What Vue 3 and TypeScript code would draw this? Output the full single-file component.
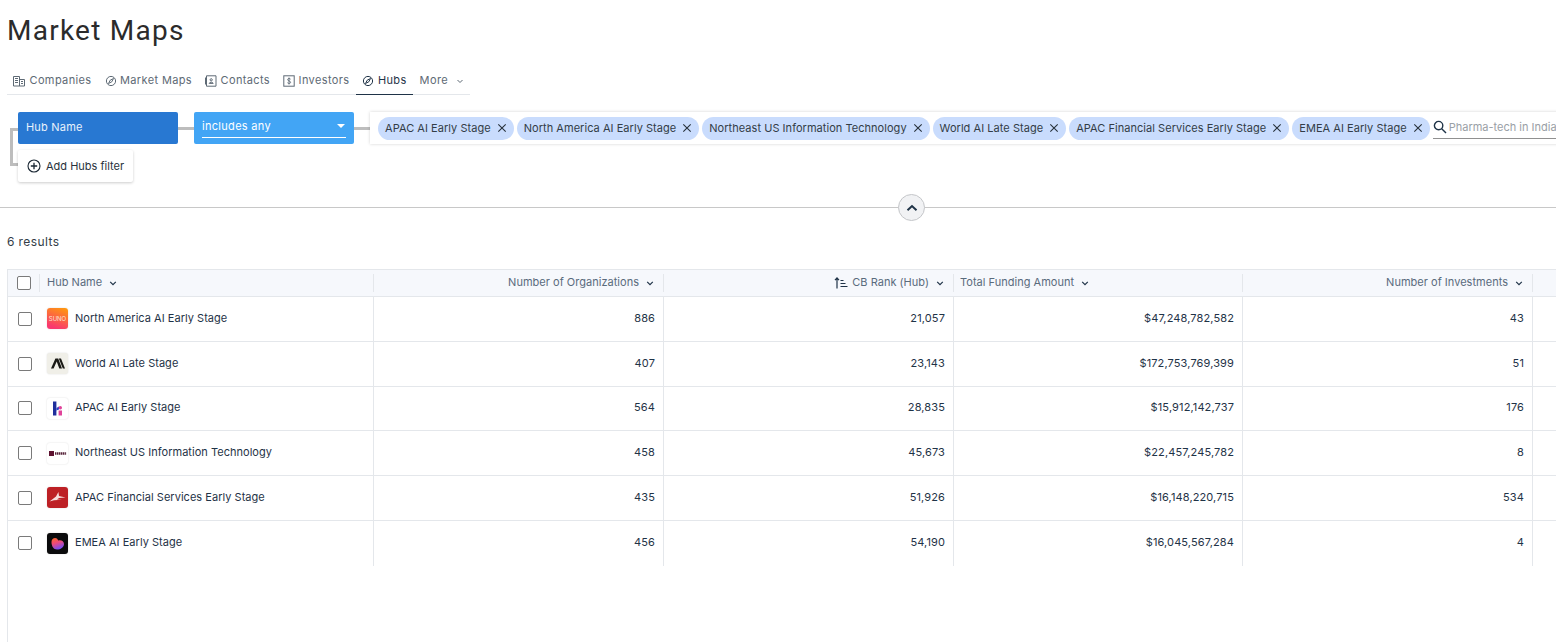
<script setup lang="ts">
interface Tab { label: string; icon: string; active?: boolean }
const tabs: Tab[] = [
  { label: 'Companies', icon: 'building' },
  { label: 'Market Maps', icon: 'compass' },
  { label: 'Contacts', icon: 'contact' },
  { label: 'Investors', icon: 'dollar' },
  { label: 'Hubs', icon: 'compass', active: true },
]
const chips: string[] = [
  'APAC AI Early Stage',
  'North America AI Early Stage',
  'Northeast US Information Technology',
  'World AI Late Stage',
  'APAC Financial Services Early Stage',
  'EMEA AI Early Stage',
]
interface Row { name: string; logo: string; orgs: string; rank: string; funding: string; inv: string }
const rows: Row[] = [
  { name: 'North America AI Early Stage', logo: 'suno', orgs: '886', rank: '21,057', funding: '$47,248,782,582', inv: '43' },
  { name: 'World AI Late Stage', logo: 'anth', orgs: '407', rank: '23,143', funding: '$172,753,769,399', inv: '51' },
  { name: 'APAC AI Early Stage', logo: 'k', orgs: '564', rank: '28,835', funding: '$15,912,142,737', inv: '176' },
  { name: 'Northeast US Information Technology', logo: 'dark', orgs: '458', rank: '45,673', funding: '$22,457,245,782', inv: '8' },
  { name: 'APAC Financial Services Early Stage', logo: 'red', orgs: '435', rank: '51,926', funding: '$16,148,220,715', inv: '534' },
  { name: 'EMEA AI Early Stage', logo: 'heart', orgs: '456', rank: '54,190', funding: '$16,045,567,284', inv: '4' },
]
</script>

<template>
  <div class="page">
    <h1 class="title">Market Maps</h1>

    <nav class="tabs">
      <a v-for="t in tabs" :key="t.label" class="tab" :class="{ active: t.active }">
        <svg class="tab-icon" viewBox="0 0 12 12" width="12" height="12" fill="none" stroke="currentColor" stroke-width="1">
          <template v-if="t.icon === 'building'">
            <path d="M0.5 11V1.5H6.5V11M6.5 4.5H11.5V11H0.5" />
            <path d="M2 3.5h3M2 5.5h3M2 7.5h3M8 6.5h2M8 8.5h2" />
          </template>
          <template v-else-if="t.icon === 'compass'">
            <circle cx="6" cy="6" r="4.6" />
            <path d="M8.5 3.5L6.8 6.8L3.5 8.5L5.2 5.2Z" />
          </template>
          <template v-else-if="t.icon === 'contact'">
            <path d="M1.5 0.8H11V11.2H1.5ZM0.5 2.5V9.5" />
            <circle cx="6.2" cy="4.8" r="1.1" />
            <path d="M4.2 8.4C4.4 6.8 8 6.8 8.2 8.4Z" />
          </template>
          <template v-else>
            <rect x="0.8" y="0.8" width="10.4" height="10.4" />
            <path d="M7.6 4.2C7.2 3.4 4.6 3.2 4.6 4.6C4.6 6.2 7.6 5.6 7.6 7.4C7.6 8.8 5 8.6 4.4 7.7M6 2.5V9.5" stroke-width="0.9" />
          </template>
        </svg>
        <span class="tab-label">{{ t.label }}</span>
      </a>
      <a class="tab more">
        <span class="tab-label">More</span>
        <svg viewBox="0 0 8 8" width="8" height="8" fill="none" stroke="currentColor" stroke-width="1"><path d="M1.5 3L4 5.5L6.5 3" /></svg>
      </a>
    </nav>

    <section class="filters">
      <div class="bracket"></div>
      <div class="filter-row">
        <div class="field">Hub Name</div>
        <div class="link"></div>
        <div class="operator">
          <div class="operator-inner">
            <span>includes any</span>
            <i class="caret"></i>
          </div>
        </div>
        <div class="link"></div>
        <div class="values">
          <span v-for="c in chips" :key="c" class="chip">
            {{ c }}
            <svg viewBox="0 0 10 10" width="10" height="10" fill="none" stroke="#28323c" stroke-width="1.1"><path d="M1.3 1.3L8.7 8.7M8.7 1.3L1.3 8.7" /></svg>
          </span>
          <div class="search">
            <svg viewBox="0 0 14 14" width="14" height="14" fill="none" stroke="#1f3347" stroke-width="1.4"><circle cx="5.6" cy="5.6" r="4.2" /><path d="M8.7 8.7L13 13" /></svg>
            <span class="placeholder">Pharma-tech in India</span>
          </div>
        </div>
      </div>
      <button class="add">
        <svg viewBox="0 0 14 14" width="14" height="14" fill="none" stroke="#1a2733" stroke-width="1.1"><circle cx="7" cy="7" r="6" /><path d="M7 3.8V10.2M3.8 7H10.2" stroke-width="1.3" /></svg>
        Add Hubs filter
      </button>
    </section>

    <div class="divider">
      <button class="collapse">
        <svg viewBox="0 0 12 8" width="12" height="8" fill="none" stroke="#1f3347" stroke-width="2"><path d="M1.5 6.2L6 2L10.5 6.2" /></svg>
      </button>
    </div>

    <div class="count">6 results</div>

    <div class="table">
      <div class="row head">
        <div class="cell first">
          <span class="box head-box"></span>
          <span class="head-sep"></span>
          <span class="head-label">Hub Name</span>
          <svg class="chev" viewBox="0 0 8 8" width="8" height="8" fill="none" stroke="currentColor" stroke-width="1.2"><path d="M1.2 2.8L4 5.6L6.8 2.8" /></svg>
        </div>
        <div class="cell num">
          <span class="head-label">Number of Organizations</span>
          <svg class="chev" viewBox="0 0 8 8" width="8" height="8" fill="none" stroke="currentColor" stroke-width="1.2"><path d="M1.2 2.8L4 5.6L6.8 2.8" /></svg>
        </div>
        <div class="cell num">
          <svg class="sort" viewBox="0 0 14 12" width="14" height="12" fill="none" stroke="#1f3347" stroke-width="1.2"><path d="M3 11.5V1M1 3.2L3 1L5 3.2M6.5 3.5H9.5M6.5 6.5H11.5M6.5 9.5H13.5" /></svg>
          <span class="head-label">CB Rank (Hub)</span>
          <svg class="chev" viewBox="0 0 8 8" width="8" height="8" fill="none" stroke="currentColor" stroke-width="1.2"><path d="M1.2 2.8L4 5.6L6.8 2.8" /></svg>
        </div>
        <div class="cell left">
          <span class="head-label">Total Funding Amount</span>
          <svg class="chev" viewBox="0 0 8 8" width="8" height="8" fill="none" stroke="currentColor" stroke-width="1.2"><path d="M1.2 2.8L4 5.6L6.8 2.8" /></svg>
        </div>
        <div class="cell num">
          <span class="head-label">Number of Investments</span>
          <svg class="chev" viewBox="0 0 8 8" width="8" height="8" fill="none" stroke="currentColor" stroke-width="1.2"><path d="M1.2 2.8L4 5.6L6.8 2.8" /></svg>
        </div>
        <div class="cell rest"></div>
      </div>

      <div v-for="r in rows" :key="r.name" class="row body">
        <div class="cell first">
          <span class="box"></span>
          <span class="logo" :class="'logo-' + r.logo">
            <span v-if="r.logo === 'suno'" class="suno">SUNO</span>
            <svg v-else-if="r.logo === 'anth'" viewBox="0 0 21 21" width="21" height="21" fill="#1a1a16"><path d="M4 15.5L8.4 5.5H11.2L15 15.5H12.3L9.7 8.6L6.6 15.5Z" /><path d="M11.8 5.5H14L18 15.5H15.8Z" /></svg>
            <svg v-else-if="r.logo === 'k'" viewBox="0 0 21 21" width="21" height="21"><path d="M6 3.5H9.4V17.5H6Z" fill="#1f2f9c" /><path d="M9.4 10L12 8.6V11.6L9.4 12.6Z" fill="#2c46c8" /><path d="M11.6 12.6H15V17.5H11.6Z" fill="#e0439a" /><circle cx="13.3" cy="9.8" r="1.7" fill="#e0439a" /></svg>
            <svg v-else-if="r.logo === 'dark'" viewBox="0 0 21 21" width="21" height="21"><path d="M2 8H7V13H2Z" fill="#5e1230" /><path d="M8 10.5H19.5" fill="none" stroke="#57243a" stroke-width="2.6" stroke-dasharray="1.4 0.5" /></svg>
            <svg v-else-if="r.logo === 'red'" viewBox="0 0 21 21" width="21" height="21" fill="#f6dcdc"><path d="M2.5 14.5L9 9.5L11.4 5L12 9L18.5 10.6L12 11L10 12.5L15 12.7L7 13.3Z" /></svg>
            <svg v-else viewBox="0 0 21 21" width="21" height="21"><defs><linearGradient id="heart" x1="0" y1="0" x2="0.4" y2="1"><stop offset="0" stop-color="#ff6a20" /><stop offset="0.5" stop-color="#ee4a7b" /><stop offset="1" stop-color="#7a4df0" /></linearGradient></defs><path d="M4.5 9C4.5 4.5 10 3.5 11.2 7.5C14 6.5 17 8 17 11C17 14.5 13.5 16.5 10 16.5C6.5 16.5 4.5 13 4.5 9Z" fill="url(#heart)" /></svg>
          </span>
          <span class="name">{{ r.name }}</span>
        </div>
        <div class="cell num value">{{ r.orgs }}</div>
        <div class="cell num value">{{ r.rank }}</div>
        <div class="cell num value">{{ r.funding }}</div>
        <div class="cell num value">{{ r.inv }}</div>
        <div class="cell rest"></div>
      </div>
    </div>
  </div>
</template>

<style>
html, body { margin: 0; background: #fff; overflow: hidden; }
</style>

<style scoped>
.page {
  width: 1556px;
  height: 642px;
  overflow: hidden;
  font-family: "Inter", "Liberation Sans", sans-serif;
  color: #1f3347;
  background: #fff;
}
.title {
  margin: 0;
  padding: 12px 0 0 7px;
  height: 56px;
  box-sizing: border-box;
  font-size: 28px;
  line-height: 37px;
  font-weight: 400;
  font-family: "Roboto", sans-serif;
  letter-spacing: 1.25px;
  color: #2b2b2b;
}
.tabs {
  display: flex;
  width: 463px;
  height: 39px;
  margin: 0 0 0 7px;
  box-sizing: border-box;
  border-bottom: 1px solid #e4e7eb;
  padding-top: 16px;
}
.tab {
  display: flex;
  align-items: flex-start;
  gap: 3.5px;
  padding: 0 6.5px;
  font-size: 11px;
  line-height: 17px;
  letter-spacing: 0.37px;
  color: #5e6a75;
  height: 23px;
  box-sizing: border-box;
  white-space: nowrap;
}
.tab:first-child { padding-left: 6px; gap: 4.5px; }
.tab-icon { margin-top: 3px; flex: none; }
.tab.active {
  color: #1f3347;
  border-bottom: 1px solid #1f3347;
}
.tab.more { gap: 8px; }
.tab.more svg { margin-top: 5px; }
.filters {
  position: relative;
  height: 112px;
  padding: 17px 0 0 18px;
  box-sizing: border-box;
}
.bracket {
  position: absolute;
  left: 10px;
  top: 33px;
  width: 8px;
  height: 38px;
  box-sizing: border-box;
  border: 3px solid #bdbdbd;
  border-right: 0;
}
.filter-row { display: flex; align-items: center; height: 32px; }
.field {
  width: 160px;
  height: 32px;
  flex: none;
  box-sizing: border-box;
  padding: 0 8px;
  background: #2878d2;
  border-radius: 2px;
  color: #e8f1fb;
  font-size: 11px;
  letter-spacing: 0.2px;
  line-height: 30px;
}
.link { width: 16px; height: 3px; flex: none; background: #bdbdbd; }
.operator {
  width: 160px;
  height: 32px;
  flex: none;
  box-sizing: border-box;
  padding: 0 8px;
  background: #42a5f5;
  border-radius: 2px;
  color: #fff;
  font-size: 11px;
}
.operator-inner {
  display: flex;
  align-items: center;
  justify-content: space-between;
  height: 26px;
  box-sizing: border-box;
  padding-top: 3px;
  border-bottom: 1px solid #fff;
  letter-spacing: 0.3px;
}
.caret {
  width: 0;
  height: 0;
  margin-right: 1px;
  border-left: 4px solid transparent;
  border-right: 4px solid transparent;
  border-top: 4px solid #fff;
}
.values {
  flex: none;
  width: 1300px;
  height: 32px;
  box-sizing: border-box;
  display: flex;
  align-items: center;
  gap: 3px;
  padding-left: 8px;
  background: #fff;
  box-shadow: 0 0 3px rgba(0, 0, 0, 0.18);
}
.chip {
  display: flex;
  align-items: center;
  justify-content: space-between;
  box-sizing: border-box;
  height: 23px;
  padding: 0 7px;
  gap: 6px;
  background: #c9dcfd;
  border-radius: 12px;
  font-size: 11px;
  letter-spacing: 0.04px;
  color: #333d47;
  white-space: nowrap;
}
.search {
  display: flex;
  align-items: center;
  gap: 2px;
  height: 24px;
  width: 300px;
  box-sizing: border-box;
  border-bottom: 1px solid #909090;
  margin-top: -2px;
}
.placeholder { font-size: 11px; color: #9aa0a6; letter-spacing: 0; white-space: nowrap; }
.add {
  position: relative;
  display: flex;
  align-items: center;
  gap: 5px;
  width: 115px;
  height: 32px;
  margin-top: 6px;
  padding: 0 0 0 9px;
  border: 0;
  border-radius: 2px;
  background: #fff;
  box-shadow: 0 1px 3px rgba(0, 0, 0, 0.2);
  font: inherit;
  font-size: 11px;
  color: #28323c;
  white-space: nowrap;
}
.divider {
  position: relative;
  height: 1px;
  background: #c8c8c8;
}
.collapse {
  position: absolute;
  left: 898px;
  top: -13px;
  width: 27px;
  height: 27px;
  padding: 0;
  display: flex;
  align-items: center;
  justify-content: center;
  border: 1px solid #c4c6c9;
  border-radius: 50%;
  background: #f1f2f4;
}
.count {
  height: 61px;
  box-sizing: border-box;
  padding: 26px 0 0 7px;
  font-size: 12px;
  line-height: 16px;
  letter-spacing: 0.4px;
  color: #333d47;
}
.table {
  margin-left: 7px;
  width: 1549px;
  height: 374px;
  border-left: 1px solid #e4e7eb;
  box-sizing: border-box;
}
.row {
  display: grid;
  grid-template-columns: 366px 290px 290px 289px 290px 24px;
  border-bottom: 1px solid #e4e7eb;
  box-sizing: border-box;
}
.row.head {
  height: 28px;
  background: #f6f8fc;
  border-top: 1px solid #e4e7eb;
}
.row.body { height: 44.75px; }
.row.body:last-child { border-bottom: 0; }
.cell {
  display: flex;
  align-items: center;
  box-sizing: border-box;
  min-width: 0;
  font-size: 11px;
  color: #1f3347;
  border-right: 1px solid #e4e7eb;
  white-space: nowrap;
}
.row.head .cell { border-right: 0; position: relative; }
.row.head .cell::after {
  content: "";
  position: absolute;
  right: 0;
  top: 4px;
  bottom: 4px;
  width: 1px;
  background: #e4e7eb;
}
.row.head .cell.rest::after { display: none; }
.cell.rest { border-right: 0; }
.cell.first { padding-left: 10px; }
.cell.num { justify-content: flex-end; padding-right: 8px; }
.cell.value { padding-bottom: 2px; letter-spacing: 0.12px; }
.cell.left { padding-left: 6px; }
.head .cell { color: #5a6b7c; }
.head-label { letter-spacing: 0.02px; padding-bottom: 2px; }
.head .cell.first { padding-left: 9px; }
.head-sep { width: 1px; height: 18px; background: #e4e7eb; margin: 0 7px 0 8px; }
.chev { margin-left: 7px; margin-right: 2px; color: #1f3347; flex: none; }
.sort { margin-right: 4px; }
.box {
  width: 14px;
  height: 14px;
  flex: none;
  box-sizing: border-box;
  border: 1px solid #7a7a7a;
  border-radius: 2px;
  background: #fff;
}
.logo {
  display: flex;
  align-items: center;
  justify-content: center;
  width: 21px;
  height: 21px;
  flex: none;
  margin: 0 7px 0 15px;
  border-radius: 3px;
  overflow: hidden;
  box-shadow: 0 0 2px rgba(0, 0, 0, 0.14);
}
.logo-suno { background: linear-gradient(200deg, #ff9d0a, #f9386f 85%); }
.logo-anth { background: #f0efe8; }
.logo-k, .logo-dark { background: #fff; }
.logo-red { background: #bd2025; }
.logo-heart { background: #0b0b0c; }
.suno { font-size: 6px; line-height: 8px; color: #fde6d0; }
.name { letter-spacing: 0.03px; padding-bottom: 2px; }
</style>
